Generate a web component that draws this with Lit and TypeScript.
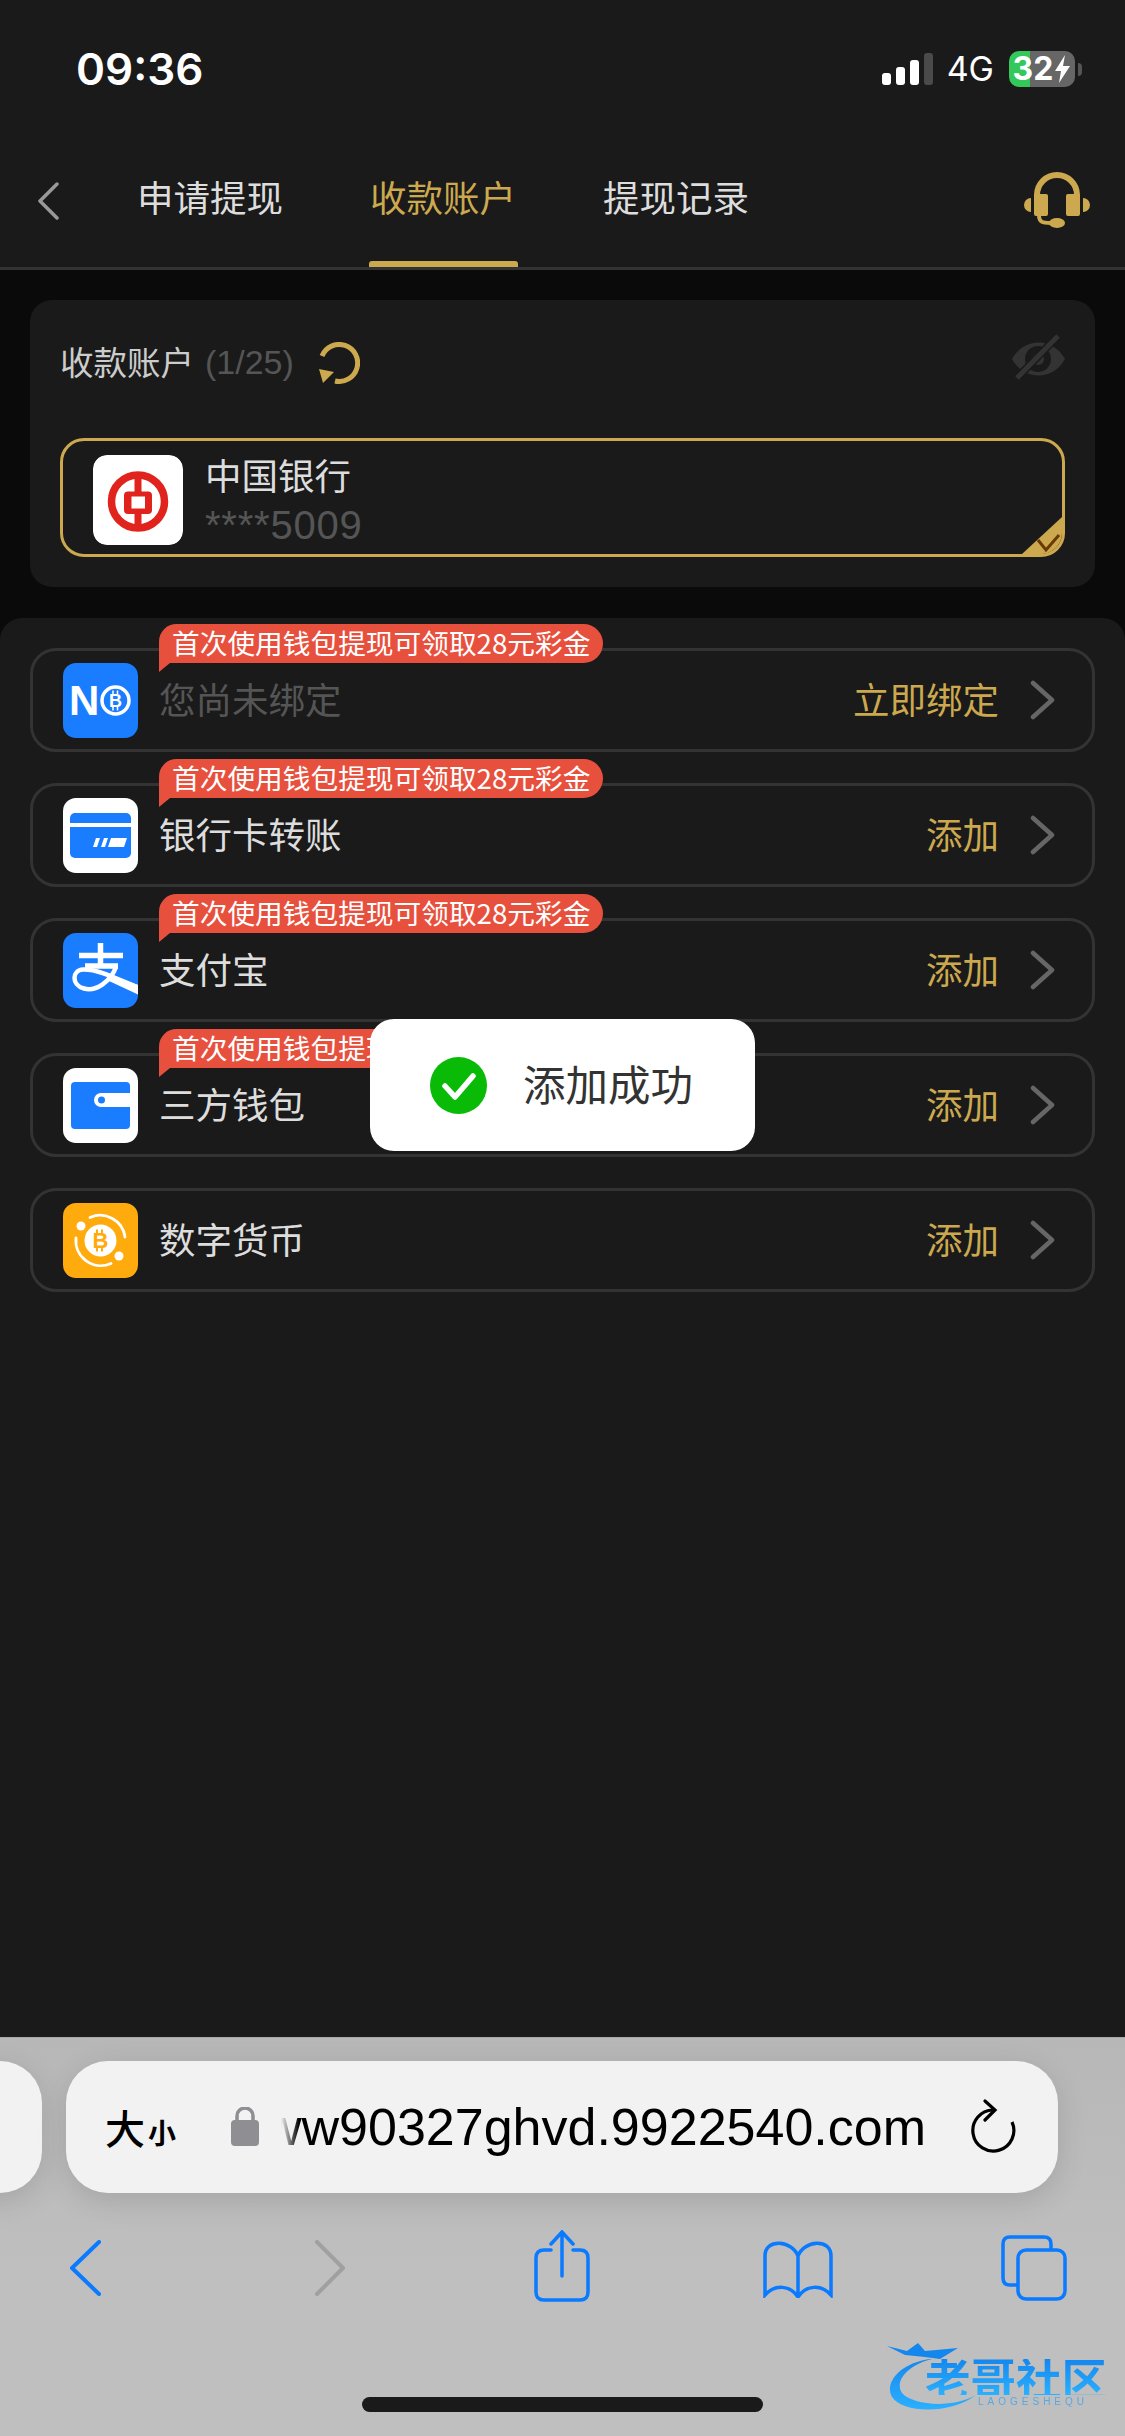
import { LitElement, html, css } from "lit";
import { customElement } from "lit/decorators.js";

const ICONS = {
  nb: html`<svg class="logo" viewBox="0 0 75 75"><rect width="75" height="75" rx="13" fill="#1a7cff"/>
    <text x="6" y="52" font-family="Liberation Sans, sans-serif" font-weight="700" font-size="42" fill="#fff">N</text>
    <circle cx="52.500" cy="37.500" r="13.500" fill="#1a7cff" stroke="#fff" stroke-width="3.500"/>
    <text x="52.500" y="44" text-anchor="middle" font-family="Liberation Sans, sans-serif" font-weight="700" font-size="18" fill="#fff">B</text>
    <path d="M50 27.500v3.500M54.500 27.500v3.500M50 44v3.500M54.500 44v3.500" stroke="#fff" stroke-width="1.500"/></svg>`,
  card: html`<svg class="logo" viewBox="0 0 75 75"><rect width="75" height="75" rx="13" fill="#fff"/>
    <path d="M7 25V20a5 5 0 0 1 5-5h51a5 5 0 0 1 5 5v5z" fill="#1a7cff"/>
    <path d="M7 29h61v26a5 5 0 0 1-5 5H12a5 5 0 0 1-5-5z" fill="#1a7cff"/>
    <path d="M33 40h4l-3 9h-4zM41 40h4l-3 9h-4zM48 40h16l-3 9H45z" fill="#fff"/></svg>`,
  ali: html`<svg class="logo" viewBox="0 0 75 75"><defs><clipPath id="alic"><rect width="75" height="75" rx="13"/></clipPath></defs>
    <g clip-path="url(#alic)"><rect width="75" height="75" fill="#1a7cff"/>
    <path d="M16 22.500H60M37.500 10V33M22 33H55" stroke="#fff" stroke-width="5.500" fill="none"/>
    <path d="M53 34C48 48 33 59 21 55.500C8 52 9 37 20 36.500C34 36 50 44 76 55" stroke="#fff" stroke-width="4.500" fill="none"/>
    <path d="M50 44L76 52V62L46 48z" fill="#fff"/></g></svg>`,
  wallet: html`<svg class="logo" viewBox="0 0 75 75"><rect width="75" height="75" rx="13" fill="#fff"/>
    <rect x="8" y="14" width="59" height="47" rx="4" fill="#1a7cff"/>
    <path d="M67 25H38a7 7 0 0 0 0 14H67z" fill="#fff"/><circle cx="38.500" cy="32" r="3.500" fill="#1a7cff"/></svg>`,
  coin: html`<svg class="logo" viewBox="0 0 75 75"><rect width="75" height="75" rx="13" fill="#ffaa0d"/>
    <circle cx="37.500" cy="37.500" r="16" fill="#fff"/>
    <path d="M27 14.500A25 25 0 0 1 62 34M13 35A25 25 0 0 0 48 60.500" stroke="#fff" stroke-width="2.800" fill="none" stroke-linecap="round"/>
    <circle cx="18" cy="23" r="4.500" fill="#fff"/><circle cx="56" cy="53" r="4.500" fill="#fff"/>
    <text x="37.500" y="45" text-anchor="middle" font-family="Liberation Sans, sans-serif" font-weight="700" font-size="22" fill="#ffaa0d">B</text>
    <path d="M34 26.500v4M39 26.500v4M34 44.500v4M39 44.500v4" stroke="#ffaa0d" stroke-width="2"/></svg>`,
};

const CHEVRON = html`<svg class="chev" viewBox="0 0 25 40"><path d="M3 3L22 20L3 37" fill="none" stroke="#666" stroke-width="4.500" stroke-linecap="round" stroke-linejoin="round"/></svg>`;

const ROWS = [
  { icon: ICONS.nb, name: "您尚未绑定", action: "立即绑定", badge: true, muted: true },
  { icon: ICONS.card, name: "银行卡转账", action: "添加", badge: true, muted: false },
  { icon: ICONS.ali, name: "支付宝", action: "添加", badge: true, muted: false },
  { icon: ICONS.wallet, name: "三方钱包", action: "添加", badge: true, muted: false },
  { icon: ICONS.coin, name: "数字货币", action: "添加", badge: false, muted: false },
];

@customElement("app-root")
export class AppRoot extends LitElement {
  static styles = css`
    :host {
      display: flex; flex-direction: column; width: 1125px; height: 2436px; position: relative; overflow: hidden;
      background: #0a0a0a; color: #ddd;
      font-family: "Noto Sans CJK SC", "Liberation Sans", sans-serif; font-weight: 400;
    }
    svg { display: block; flex: none; }
    .header { background: #1a1a1a; border-bottom: 3px solid #333; height: 270px; box-sizing: border-box; flex: none; }
    .status { height: 138px; display: flex; align-items: center; padding: 0 43px 0 76px; }
    .time { font: 600 44px/1 Inter, sans-serif; color: #fff; }
    .status-right { margin-left: auto; display: flex; align-items: center; }
    .net { font: 400 34px/1 Inter, sans-serif; color: #fff; margin: 0 15px 0 14px; }
    .batt { width: 66px; height: 36px; border-radius: 10px; background: linear-gradient(90deg, #34c759 21px, #666 21px);
      display: flex; align-items: center; justify-content: center; gap: 1px; color: #fff; font: 700 32px/36px Inter, sans-serif; }
    .nub { width: 4px; height: 13px; background: #555; border-radius: 0 4px 4px 0; margin-left: 3px; }
    .nav { height: 129px; display: flex; padding-right: 33px; }
    .back { margin: 44px 0 0 37px; }
    .tabs { display: flex; gap: 85px; margin-left: 78px; }
    .tab { position: relative; font-size: 36.500px; line-height: 50px; padding-top: 34px; color: #ddd; width: 148px; }
    .tab.on { color: #cca94f; }
    .tab.on::after { content: ""; position: absolute; left: -1px; right: 0; bottom: 0; height: 6px; border-radius: 3px 3px 0 0; background: #cca94f; }
    .support { margin: 32px 0 0 auto; }

    .main { flex: 1; display: flex; flex-direction: column; gap: 31px; padding-top: 30px; min-height: 0; }
    .card { margin: 0 30px; background: #1a1a1a; border-radius: 22px; padding: 30px; height: 287px; box-sizing: border-box; flex: none; }
    .card-head { height: 60px; display: flex; align-items: center; margin-bottom: 48px; }
    .card-title { font-size: 33.500px; color: #ccc; }
    .count { font: 400 34px/1 "Liberation Sans", sans-serif; color: #555; margin: 4px 0 0 11px; }
    .refresh { margin: 5px 0 0 24px; }
    .eye { margin: 0 -3px 6px auto; }
    .sel { position: relative; height: 119px; box-sizing: border-box; border: 3px solid #cca94f; border-radius: 24px; overflow: hidden;
      padding: 14px 30px; display: flex; gap: 22px; }
    .bank { width: 90px; height: 90px; border-radius: 14px; }
    .sel-text { display: flex; flex-direction: column; gap: 8px; }
    .sel-name { font-size: 36.500px; line-height: 40px; color: #ddd; }
    .sel-num { font: 400 40px/44px "Liberation Sans", sans-serif; color: #555; letter-spacing: .8px; }
    .corner { position: absolute; right: 0; bottom: 0; }

    .panel { flex: 1; background: #1a1a1a; border-radius: 22px 22px 0 0; padding: 30px; display: flex; flex-direction: column; gap: 31px; }
    .row { position: relative; height: 104px; box-sizing: border-box; border: 3px solid #333; border-radius: 26px; display: flex; align-items: center;
      padding: 0 37px 0 30px; }
    .logo { width: 75px; height: 75px; margin-right: 21px; }
    .name { font-size: 36.500px; color: #ddd; padding-bottom: 3px; }
    .name.muted { color: #555; }
    .action { margin-left: auto; font-size: 36.500px; color: #cca94f; padding-bottom: 3px; }
    .chev { width: 25px; height: 40px; margin-left: 31px; }
    .badge { position: absolute; left: 126px; top: -27px; height: 39px; padding: 0 13px 4px; box-sizing: border-box; display: flex; align-items: center; background: #e8503e;
      border-radius: 18px 20px 20px 0; color: #fff; font-size: 27.700px; white-space: nowrap; }
    .badge::after { content: ""; position: absolute; left: 0; top: 39px; width: 11px; height: 9px; background: #e8503e; clip-path: polygon(0 0, 100% 0, 0 100%); }

    .toast { position: absolute; left: 370px; top: 1019px; width: 385px; height: 132px; background: #fff; border-radius: 24px;
      display: flex; align-items: center; padding-left: 60px; box-sizing: border-box; gap: 36px; z-index: 5; }
    .toast-text { font-size: 42.500px; color: #333; padding-bottom: 5px; }

    .browser { flex: none; height: 399px; box-sizing: border-box; position: relative; background: linear-gradient(#b7b7b7, #bfbfbf 60%); border-top: 1px solid #a8a8a8; padding-top: 23px; }
    .pills { display: flex; gap: 24px; height: 132px; margin-left: -58px; }
    .pill { background: #f2f2f2; border-radius: 42px; box-shadow: 0 8px 30px rgba(0,0,0,.12); }
    .pill.side { width: 100px; flex: none; }
    .pill.url { width: 992px; flex: none; display: flex; align-items: center; padding-left: 39px; box-sizing: border-box; color: #000; }
    .aa { display: flex; align-items: baseline; color: #000; width: 125px; flex: none; }
    .aa b { font-size: 40px; font-weight: 500; }
    .aa i { font-size: 28px; font-style: normal; margin-left: 3px; font-weight: 700; }
    .addr { width: 645px; flex: none; margin-left: 21px; overflow: hidden; display: flex; justify-content: flex-end; white-space: nowrap;
      font: 400 52px/60px "Liberation Sans", sans-serif; color: #000;
      -webkit-mask-image: linear-gradient(90deg, transparent, #000 18px); mask-image: linear-gradient(90deg, transparent, #000 18px); }
    .reload { margin-left: 44px; }
    .tools { display: flex; align-items: center; height: 72px; margin-top: 37px; padding-left: 70px; }
    .low { margin-top: 4px; }
    .fwd { margin-left: 214px; } .share { margin-left: 189px; } .book { margin-left: 173px; } .tabsi { margin-left: 168px; }
    .home { width: 401px; height: 15px; border-radius: 8px; background: #1a1a1a; margin: 95px auto 0; }
    .wm { position: absolute; left: 885px; top: 303px; width: 230px; height: 75px; filter: blur(.5px); }
    .wm-arc { position: absolute; left: 0; top: 0; }
    .wm-title { position: absolute; left: 40px; top: 18px; font-size: 45.500px; line-height: 36px; font-weight: 700; white-space: nowrap;
      background: linear-gradient(#1487ee, #2bb0ff); -webkit-background-clip: text; background-clip: text; color: transparent; }
    .wm-sub { position: absolute; left: 93px; top: 56px; font: 400 10px/10px "Liberation Sans", sans-serif; letter-spacing: 4px; color: #5aa8e0; }
  `;

  render() {
    return html`
      <div class="header">
        <div class="status">
          <div class="time">09:36</div>
          <div class="status-right">
            <svg width="51" height="33" viewBox="882 53 51 33"><rect x="882" y="73" width="9" height="12" rx="3" fill="#fff"/><rect x="896" y="67" width="9" height="18" rx="3" fill="#fff"/><rect x="910" y="60" width="9" height="25" rx="3" fill="#fff"/><rect x="924" y="53" width="9" height="32" rx="3" fill="#4a4a4a"/></svg>
            <div class="net">4G</div>
            <div class="batt">32<svg width="17" height="28" viewBox="0 0 17 28"><path d="M11 0L1 16H7L5 28L16 11H9z" fill="#fff"/></svg></div>
            <div class="nub"></div>
          </div>
        </div>
        <div class="nav">
          <svg class="back" width="22" height="38" viewBox="0 0 22 38"><path d="M20 2L3 19L20 36" fill="none" stroke="#999" stroke-width="3.500" stroke-linecap="round" stroke-linejoin="round"/></svg>
          <div class="tabs">
            <div class="tab">申请提现</div>
            <div class="tab on">收款账户</div>
            <div class="tab">提现记录</div>
          </div>
          <svg class="support" width="70" height="62" viewBox="1022 170 70 62">
            <path d="M1037 197V195a20 20 0 0 1 40 0V197" fill="none" stroke="#cca94f" stroke-width="6"/>
            <rect x="1034" y="194" width="14" height="22" rx="2" fill="#cca94f"/><rect x="1066" y="194" width="14" height="22" rx="2" fill="#cca94f"/>
            <path d="M1031 198a7 7 0 0 0 0 14zM1083 198a7 7 0 0 1 0 14z" fill="#cca94f"/>
            <path d="M1039 215c0 7 3 8 12 8" fill="none" stroke="#cca94f" stroke-width="4"/><ellipse cx="1057" cy="223" rx="8" ry="5" fill="#cca94f"/>
          </svg>
        </div>
      </div>
      <div class="main">
        <div class="card">
          <div class="card-head">
            <div class="card-title">收款账户</div>
            <div class="count">(1/25)</div>
            <svg class="refresh" width="42" height="42" viewBox="318 342 42 42">
              <path d="M322 356A18.500 18.500 0 1 1 335 381" fill="none" stroke="#cca94f" stroke-width="5"/>
              <path d="M319 369L334 372L323 383z" fill="#cca94f"/>
            </svg>
            <svg class="eye" width="60" height="46" viewBox="1008 334 60 46">
              <path d="M1012 359C1024 337 1053 337 1065 359C1053 381 1024 381 1012 359z" fill="#333"/>
              <circle cx="1038" cy="359" r="13" fill="#1a1a1a"/><circle cx="1038" cy="359" r="6" fill="#333"/>
              <path d="M1058 336L1017 378" stroke="#1a1a1a" stroke-width="8"/><path d="M1058 336L1017 378" stroke="#333" stroke-width="5"/>
            </svg>
          </div>
          <div class="sel">
            <svg class="bank" viewBox="0 0 90 90"><rect width="90" height="90" rx="14" fill="#fff"/>
              <circle cx="45" cy="46.500" r="26.500" fill="none" stroke="#e0231c" stroke-width="7.500"/>
              <path d="M45 18V75" stroke="#e0231c" stroke-width="7"/>
              <rect x="31" y="36.500" width="28" height="22.500" rx="4" fill="#e0231c"/><rect x="38.500" y="41.500" width="13.500" height="12" fill="#fff"/></svg>
            <div class="sel-text"><div class="sel-name">中国银行</div><div class="sel-num">****5009</div></div>
            <svg class="corner" width="40" height="37" viewBox="0 0 40 37"><path d="M40 0V37H0z" fill="#cca94f"/><path d="M16 23L24 33L37 18" fill="none" stroke="#6b3a00" stroke-width="3"/></svg>
          </div>
        </div>
        <div class="panel">
          ${ROWS.map((r) => html`
            <div class="row">
              ${r.badge ? html`<div class="badge">首次使用钱包提现可领取28元彩金</div>` : ""}
              ${r.icon}
              <div class="name ${r.muted ? "muted" : ""}">${r.name}</div>
              <div class="action">${r.action}</div>
              ${CHEVRON}
            </div>`)}
        </div>
      </div>
      <div class="toast">
        <svg width="57" height="57" viewBox="0 0 57 57"><circle cx="28.500" cy="28.500" r="28.500" fill="#09bb07"/><path d="M15 29L25 40L43 19" fill="none" stroke="#fff" stroke-width="5.500" stroke-linecap="round" stroke-linejoin="round"/></svg>
        <div class="toast-text">添加成功</div>
      </div>
      <div class="browser">
        <div class="pills">
          <div class="pill side"></div>
          <div class="pill url">
            <div class="aa"><b>大</b><i>小</i></div>
            <svg width="30" height="40" viewBox="229 2107 30 40"><path d="M236 2122V2116a8 8 0 0 1 16 0V2122" fill="none" stroke="#8e8e93" stroke-width="3.500"/><rect x="230" y="2120" width="28" height="26" rx="4" fill="#8e8e93"/></svg>
            <div class="addr">www90327ghvd.9922540.com</div>
            <svg class="reload" width="46" height="56" viewBox="970 2097 46 56"><path d="M993 2108A20.500 20.500 0 1 0 1012 2120" fill="none" stroke="#000" stroke-width="3.200"/><path d="M985 2099L995 2108L985 2118" fill="none" stroke="#000" stroke-width="3.200" stroke-linecap="round"/></svg>
          </div>
        </div>
        <div class="tools">
          <svg class="low" width="31" height="56" viewBox="70 2240 31 56"><path d="M99 2242L72 2268L99 2294" fill="none" stroke="#0a7aff" stroke-width="4" stroke-linecap="round" stroke-linejoin="round"/></svg>
          <svg class="fwd low" width="30" height="56" viewBox="315 2240 30 56"><path d="M317 2242L343 2268L317 2294" fill="none" stroke="#a0a0a0" stroke-width="4" stroke-linecap="round" stroke-linejoin="round"/></svg>
          <svg class="share" width="56" height="72" viewBox="534 2230 56 72"><g fill="none" stroke="#0a7aff" stroke-width="3.500" stroke-linecap="round"><path d="M551 2250H544Q536 2250 536 2258V2292Q536 2300 544 2300H580Q588 2300 588 2292V2258Q588 2250 580 2250H573"/><path d="M562 2276V2233M551 2244L562 2232L573 2244"/></g></svg>
          <svg class="book low" width="70" height="60" viewBox="763 2238 70 60"><path d="M798 2256C792 2240 765 2238 765 2256V2295C775 2284 790 2285 798 2297C806 2285 821 2284 831 2295V2256C831 2238 804 2240 798 2256V2297" fill="none" stroke="#0a7aff" stroke-width="3.500"/></svg>
          <svg class="tabsi low" width="66" height="66" viewBox="1001 2235 66 66"><g fill="none" stroke="#0a7aff" stroke-width="3.500"><path d="M1018 2285H1010Q1003 2285 1003 2278V2244Q1003 2237 1010 2237H1044Q1051 2237 1051 2244V2250"/><rect x="1018" y="2250" width="47" height="49" rx="8"/></g></svg>
        </div>
        <div class="home"></div>
        <div class="wm">
          <svg class="wm-arc" width="230" height="75" viewBox="885 2340 230 75">
            <defs><linearGradient id="wmg" x1="0" y1="0" x2="0" y2="1"><stop offset="0" stop-color="#1487ee"/><stop offset="1" stop-color="#2bb0ff"/></linearGradient></defs>
            <path d="M930 2358C900 2362 884 2382 892 2396C902 2412 950 2414 976 2394C952 2408 912 2404 902 2392C894 2380 908 2364 932 2358z" fill="url(#wmg)"/>
            <path d="M887 2345L907 2350L918 2342L925 2350L958 2347L940 2358L925 2356L905 2354z" fill="#1487ee"/>
          </svg>
          <div class="wm-title">老哥社区</div>
          <div class="wm-sub">LAOGESHEQU</div>
        </div>
      </div>
    `;
  }
}
